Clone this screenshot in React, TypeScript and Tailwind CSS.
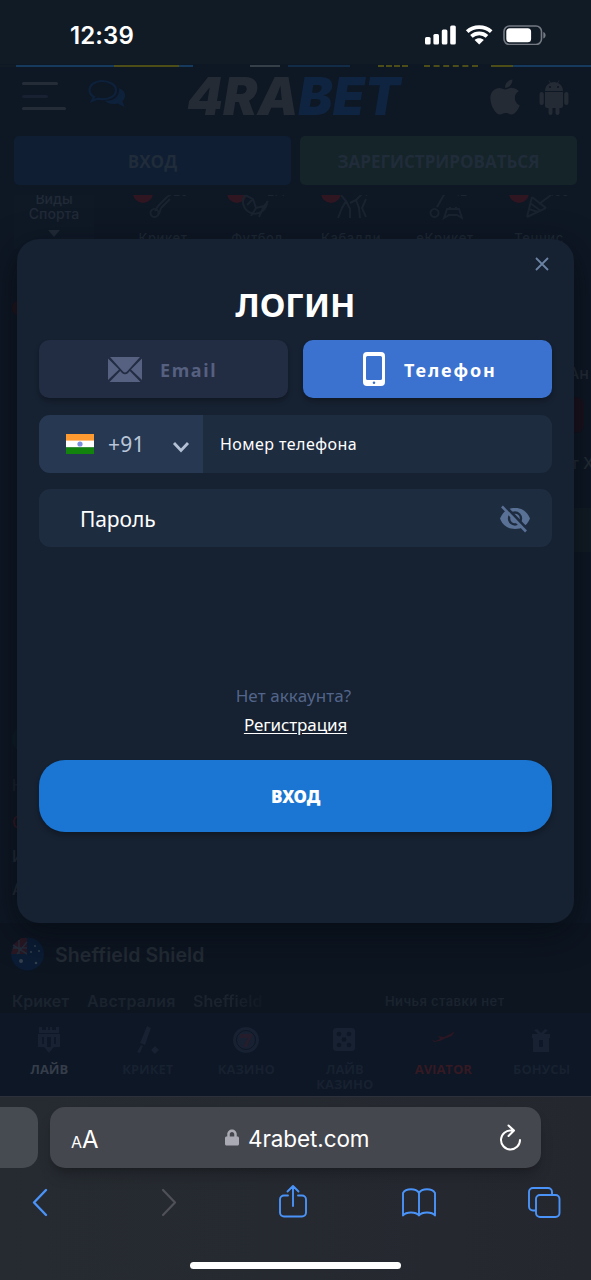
import { useState } from 'react';
import type { ReactNode } from 'react';
import { FaApple, FaLock } from 'react-icons/fa';

interface Sport {
  name: string;
  count: string;
  live: boolean;
  icon: ReactNode;
}

const SPORTS: Sport[] = [
  {
    name: 'Крикет',
    count: '20',
    live: true,
    icon: <path d="M22 6l6-4M22 6l-9 9M25 8l-9 9M6 20a4 4 0 107 4 4 4 0 00-7-4zM13 15l-3 5M16 17l-2 6" />,
  },
  {
    name: 'Футбол',
    count: '277',
    live: true,
    icon: <path d="M6 4a12 12 0 1022 6M6 4l8 4 3 9-5 8M17 17l8-2 4-5M8 14l6-6M20 26l5-11" />,
  },
  {
    name: 'Кабадди',
    count: '4',
    live: true,
    icon: <path d="M8 4l5 6-4 7-4 10M13 10l4 8v9M29 3l-6 6 3 8 1 10M23 9l-6 3M33 8l-4 9 4 9" />,
  },
  {
    name: 'еКрикет',
    count: '12',
    live: false,
    icon: <path d="M18 2l-8 14M4 20a4 4 0 107 4 4 4 0 00-7-4zM20 18h12l3 9-5-3h-8l-5 3zM23 16v3M29 16v3" />,
  },
  {
    name: 'Теннис',
    count: '106',
    live: true,
    icon: <path d="M6 26L11 6M6 26l19-9M11 6l14 11M30 4l-12 9M8 18l9 3M9 12l11 8" />,
  },
];

interface NavItem {
  label: string;
  color: string;
  icon: ReactNode;
}

const NAV: NavItem[] = [
  {
    label: 'ЛАЙВ',
    color: 'text-[#353d4a]',
    icon: (
      <g className="fill-[#172131]">
        <path d="M3 1h3v3h4V1h2v3h2V1h2v3h4V1h3v6H3z" />
        <path d="M2 8h22v13h-6l-5 6-5-6H2zM6 11v7h2v-7zm5 0v10h4V11zm7 0v7h2v-7z" />
      </g>
    ),
  },
  {
    label: 'КРИКЕТ',
    color: 'text-[#172130]',
    icon: (
      <g className="fill-[#172131]">
        <path d="M13 0l4 2-6 17-5-2zM7 19l2 1-3 7-3-1z" />
        <path d="M21 20l4 4-4 4-4-4z" />
      </g>
    ),
  },
  {
    label: 'КАЗИНО',
    color: 'text-[#172130]',
    icon: (
      <g>
        <circle cx="13" cy="14" r="13" className="fill-[#172131]" />
        <circle cx="13" cy="14" r="9.500" className="fill-none stroke-[#0e1725] stroke-1" />
        <path d="M7 8h13l-6 13h-4l5-9H7z" className="fill-[#251d2b]" />
      </g>
    ),
  },
  {
    label: 'ЛАЙВ КАЗИНО',
    color: 'text-[#172130]',
    icon: (
      <g>
        <rect x="2" y="2" width="22" height="23" rx="3" className="fill-[#172131]" />
        <g className="fill-[#0e1725]">
          <circle cx="8" cy="8" r="2.3" />
          <circle cx="18" cy="8" r="2.3" />
          <circle cx="13" cy="13.5" r="2.3" />
          <circle cx="8" cy="19" r="2.3" />
          <circle cx="18" cy="19" r="2.3" />
        </g>
      </g>
    ),
  },
  {
    label: 'AVIATOR',
    color: 'text-[#351923]',
    icon: <path d="M1 13l3 3 6-1 4-2 8-3 3-5-5 3-6 3-6-1 2 3-5 2z" className="fill-[#2a1723]" />,
  },
  {
    label: 'БОНУСЫ',
    color: 'text-[#172130]',
    icon: (
      <path
        d="M4 8h6L6 4l3-1 4 4 4-4 3 1-4 4h6v4h-1v14H5V12H4zM11 14v7h4v-7z"
        className="fill-[#172131]"
      />
    ),
  },
];

function StatusBar() {
  return (
    <div className="flex h-16 shrink-0 items-center bg-[#111b26] pt-1.5 pl-[70px] pr-[45px]">
      <span className="pt-0.5 font-['Inter'] text-[24px] font-semibold tracking-[0.1px] text-white">12:39</span>
      <svg width="121" height="20" viewBox="0 0 121 20" className="ml-auto">
        <g className="fill-white">
          <rect x="0" y="12" width="5.6" height="7.5" rx="1.5" />
          <rect x="8.4" y="9" width="5.6" height="10.5" rx="1.5" />
          <rect x="16.8" y="4.5" width="5.6" height="15" rx="1.5" />
          <rect x="25.2" y="0.5" width="5.6" height="19" rx="1.5" />
          <path d="M54.2 19.6l-4.600-4.600c2.300-2.200 6.900-2.200 9.200 0z" />
        </g>
        <path d="M42.200 6.600c6.700-6 17.300-6 24 0M46.400 11.400c4.500-4 11.100-4 15.600 0" className="fill-none stroke-white stroke-[3.8]" />
        <rect x="79" y="1" width="37.5" height="18.5" rx="5.5" className="fill-none stroke-[#747982] stroke-[1.6]" />
        <rect x="81.3" y="3.3" width="24.8" height="14" rx="3.5" className="fill-white" />
        <path d="M118.3 7c3 .9 3 5.600 0 6.500z" className="fill-[#747982]" />
      </svg>
    </div>
  );
}

function SiteHeader() {
  return (
    <header className="flex h-[69px] shrink-0 items-start pt-1.5 pl-[22px] pr-[22px]">
      <div className="flex w-11 flex-col gap-[9.5px] pt-[9px]">
        <span className="h-[3px] w-9 rounded bg-[#242c38]" />
        <span className="h-[3px] w-[26px] rounded bg-[#172131]" />
        <span className="h-[3px] w-11 rounded bg-[#242c38]" />
      </div>
      <svg width="38" height="30" viewBox="0 0 38 30" className="ml-[22px] mt-1.5">
        <path
          d="M14 2C7 2 1.500 5.800 1.500 11c0 3 1.800 5.500 4.500 7l-2 4 6-2.400c10 2 18-2 18-8.600C28 5.800 21 2 14 2z"
          className="fill-none stroke-[#0e213b] stroke-[2.2]"
        />
        <path d="M31 9c7 3 8 9 3.500 13l2 6-7-3.500c-6 1.500-11-.5-13-3 9 1 15.500-4 14.500-12.500z" className="fill-[#0e213b]" />
      </svg>
      <svg width="220" height="62" viewBox="0 0 220 62" className="ml-[61px] -mt-1.5 overflow-visible">
        <text
          x="0"
          y="48"
          textLength="213"
          lengthAdjust="spacingAndGlyphs"
          className="font-['Inter'] text-[52px] leading-none font-black italic"
        >
          <tspan className="fill-[#242b35]">4RA</tspan>
          <tspan className="fill-[#0f2440]">BET</tspan>
        </text>
      </svg>
      <div className="ml-auto flex items-center gap-[17px] pt-1">
        <FaApple className="h-[40px] w-[34px] text-[#242b35]" />
        <svg width="30" height="35" viewBox="0 0 30 35" className="fill-[#242b35]">
          <path d="M6 11c0-4 2-6.500 5-8L9.500.600l.6-.4L11.800 2.700c2-.8 4.400-.8 6.400 0L19.900.200l.6.4L19 3c3 1.500 5 4 5 8zM11 6a1 1 0 100 2 1 1 0 000-2zM19 6a1 1 0 100 2 1 1 0 000-2z" />
          <path d="M6 12h18v14a2 2 0 01-2 2h-1.500v5a2 2 0 01-4 0v-5h-3v5a2 2 0 01-4 0v-5H8a2 2 0 01-2-2z" />
          <rect x="0.500" y="12" width="4.300" height="13" rx="2.100" />
          <rect x="25.200" y="12" width="4.300" height="13" rx="2.100" />
        </svg>
      </div>
    </header>
  );
}

function SportsRow() {
  return (
    <div className="flex h-[54px] shrink-0 overflow-hidden">
      <div className="ml-[14px] flex w-[80px] flex-col items-center bg-[#0f1926] font-['Inter'] text-[14px] leading-[16px] font-medium text-[#212a37]">
        <span className="-mt-1">Виды</span>
        <span className="-mt-px">Спорта</span>
        <span className="mt-2 border-x-[6px] border-t-[7px] border-x-transparent border-t-[#212a37]" />
      </div>
      <div className="ml-[22px] flex gap-0">
        {SPORTS.map((sport) => (
          <div key={sport.name} className="flex w-[94px] flex-col items-center">
            <div className="flex h-9 w-[60px] items-start">
              <span
                className={
                  sport.live
                    ? '-mt-3 -mr-3 h-5 w-5 shrink-0 rounded-full bg-[#2f1620]'
                    : '-mr-3 h-5 w-5 shrink-0'
                }
              />
              <svg width="36" height="32" viewBox="0 0 36 32" className="ml-1 -mt-1 shrink-0 fill-none stroke-[#192330] stroke-2">
                {sport.icon}
              </svg>
              <span className="-ml-2 -mt-2.5 font-['Inter'] text-[12px] leading-[14px] text-[#1c2632]">{sport.count}</span>
            </div>
            <span className="font-['Inter'] text-[13px] leading-[14px] font-medium tracking-[0.6px] text-[#1f2936]">
              {sport.name}
            </span>
          </div>
        ))}
      </div>
    </div>
  );
}

// Match feed: only its edges stick out from under the dialog
function Feed() {
  return (
    <div className="flex h-[684px] shrink-0 justify-between overflow-hidden font-['Inter'] text-[16px] leading-6 font-medium text-[#252d37]">
      <div className="flex w-6 flex-col pl-3">
        <span className="mt-[61px] h-4 w-5 rounded-full bg-[#22141d]" />
        <span className="mt-[409px] h-7 w-7 rounded-full bg-[#0e1d29]" />
        <span className="mt-[20px] text-[#1b232e]">Н</span>
        <span className="mt-[13px] text-[#3a1820]">0</span>
        <span className="mt-2.5">И</span>
        <span className="mt-[9px]">А</span>
      </div>
      <div className="flex w-[23px] flex-col">
        <span className="mt-[122px]">Ан</span>
        <span className="mt-3 h-9 w-4 rounded-full bg-[#1b111c]" />
        <span className="mt-[18px] ml-[3px] whitespace-nowrap">т Х</span>
        <span className="mt-[33px] h-11 w-[23px] bg-[#121c24]" />
      </div>
    </div>
  );
}

function LeagueRow() {
  return (
    <div className="flex h-[90px] shrink-0 flex-col bg-[#0d1521]">
      <div className="flex items-center gap-[11px] pt-[14px] pl-[11px]">
        <svg width="33" height="34" viewBox="0 0 33 34">
          <circle cx="16.500" cy="17" r="16.500" className="fill-[#0b1c34]" />
          <path d="M3 7l7-6h6v16H0z" className="fill-[#2a1723]" />
          <path d="M2 8l14 9M16 5L6 17M8 3v14M2 11h14" className="stroke-[#232c3a] stroke-[1.500]" />
          <g className="fill-[#34404d]">
            <circle cx="10" cy="24" r="2" />
            <circle cx="24" cy="9" r="1" />
            <circle cx="20" cy="15" r="1" />
            <circle cx="28" cy="14" r="1" />
            <circle cx="25" cy="26" r="1.300" />
          </g>
        </svg>
        <span className="pt-0.5 font-['Inter'] text-[19.5px] leading-[30px] font-semibold tracking-[0.1px] text-[#232b34]">
          Sheffield Shield
        </span>
      </div>
      <div className="mt-[20px] flex items-center pl-3 font-['Inter'] font-semibold text-[#1a232e]">
        <span className="w-[75px] text-[16px] leading-5">Крикет</span>
        <span className="w-[106px] text-[16px] leading-5 tracking-[0.3px]">Австралия</span>
        <span className="w-[192px] bg-gradient-to-r from-[#1a232e] from-[20%] to-[#0d1521] to-[42%] bg-clip-text text-[16px] leading-5 text-transparent">
          Sheffield
        </span>
        <span className="text-[13px] leading-5 tracking-[0.4px]">Ничья ставки нет</span>
      </div>
    </div>
  );
}

function BottomNav() {
  return (
    <nav className="grid h-[83px] shrink-0 grid-cols-6 bg-[#0d1725]">
      {NAV.map((item) => (
        <div key={item.label} className="flex flex-col items-center pt-[13px]">
          <svg width="27" height="28" viewBox="0 0 27 28">
            {item.icon}
          </svg>
          <span
            className={`mt-2 w-16 text-center font-['Open_Sans'] text-[13px] leading-[15px] font-bold ${item.color}`}
          >
            {item.label}
          </span>
        </div>
      ))}
    </nav>
  );
}

function BrowserBar() {
  return (
    <div className="flex h-[184px] shrink-0 flex-col border-t border-[#2b303b] bg-gradient-to-r from-[#262b31] to-[#25272f]">
      <div className="mt-2.5 flex h-[61px] gap-3">
        <div className="w-[38px] rounded-r-[15px] bg-[#464b51]" />
        <div className="flex w-[491px] items-center rounded-[15px] bg-[#45474e] pl-[21px] pr-[19px] font-['Inter'] text-white shadow-lg shadow-black/20">
          <span className="flex w-[154px] items-baseline pt-1">
            <span className="text-[16px]">A</span>
            <span className="text-[24px]">A</span>
          </span>
          <FaLock className="h-[19px] w-[14px] text-[#a9aab3]" />
          <span className="ml-[9px] pt-0.5 text-[22.500px] tracking-[-0.1px]">4rabet.com</span>
          <svg width="23" height="28" viewBox="0 0 23 28" className="ml-auto fill-none stroke-white stroke-2">
            <path d="M12.500 6.500A9.500 9.500 0 1021 16M9.500 1.500l5.500 5-5.500 5.500" strokeLinecap="round" strokeLinejoin="round" />
          </svg>
        </div>
      </div>
      <div className="mt-[15px] flex h-[38px] items-center pl-[31px] text-[#4a93f8]">
        <svg width="18" height="38" viewBox="0 0 18 38" className="fill-none stroke-current stroke-[2.4]">
          <path d="M15 7L3 19.500 15 32" strokeLinecap="round" strokeLinejoin="round" />
        </svg>
        <svg width="18" height="38" viewBox="0 0 18 38" className="ml-[111px] fill-none stroke-[#505158] stroke-[2.200]">
          <path d="M3 7l12 12.500L3 32" strokeLinecap="round" strokeLinejoin="round" />
        </svg>
        <svg width="28" height="38" viewBox="0 0 28 38" className="ml-[101px] fill-none stroke-current stroke-[1.900]">
          <path
            d="M9 12.500H5a4 4 0 00-4 4v13a4 4 0 004 4h18a4 4 0 004-4v-13a4 4 0 00-4-4h-4M14 23V3M8.500 8.500L14 3l5.500 5.500"
            strokeLinecap="round"
            strokeLinejoin="round"
          />
        </svg>
        <svg width="34" height="38" viewBox="0 0 34 38" className="ml-[95px] fill-none stroke-current stroke-[1.900]">
          <path
            d="M17 32.500c-3-4-13-4-16 0V10c3-5 13-5 16 0 3-5 13-5 16 0v22.500c-3-4-13-4-16 0zM17 10v22"
            strokeLinejoin="round"
          />
        </svg>
        <svg width="34" height="38" viewBox="0 0 34 38" className="ml-[91px] fill-none stroke-current stroke-[1.900]">
          <path d="M9 27.500H6a4 4 0 01-4-4V9a4 4 0 014-4h15a4 4 0 014 4v3" />
          <rect x="9" y="12" width="23.500" height="22" rx="4" />
        </svg>
      </div>
      <div className="mx-auto mt-auto mb-[11px] h-[7px] w-[211px] rounded-full bg-white" />
    </div>
  );
}

function LoginModal() {
  const [method, setMethod] = useState<'email' | 'phone'>('phone');

  const tabClass = (active: boolean) =>
    `flex h-[58px] w-[249px] items-center rounded-[10px] font-['Noto_Sans'] text-[18px] font-bold shadow-md shadow-black/20 ${
      active ? 'bg-[#3b72cf] text-white' : 'bg-[#222c42] text-[#566080]'
    }`;

  return (
    <div className="absolute top-[239px] left-[17px] flex h-[684px] w-[557px] flex-col rounded-[22px] bg-[#162131] px-[22px] font-['Noto_Sans',sans-serif] shadow-[0_10px_34px_rgba(6,11,17,0.75)]">
      <button className="mt-[17px] mr-0.5 ml-auto h-4 w-4">
        <svg width="16" height="16" viewBox="0 0 16 16" className="fill-none stroke-[#6b83a3] stroke-[1.800]">
          <path d="M2 2l12 12M14 2L2 14" />
        </svg>
      </button>
      <h1 className="mt-2.5 h-[58px] text-center text-[33px] leading-[46px] font-bold text-white">ЛОГИН</h1>

      <div className="flex justify-between">
        <button className={tabClass(method === 'email')} onClick={() => setMethod('email')}>
          <svg width="34" height="25" viewBox="0 0 34 25" className="ml-[69px]">
            <path
              d="M2 0h30L19 14.500c-1.200 1.300-2.800 1.300-4 0zM0 1.500L11 12.500 0 23zM34 1.500v21.500L23 12.500zM12.200 14l2 2.200c1.600 1.500 4 1.500 5.600 0l2-2.200L32.500 25h-31z"
              className="fill-[#566080]"
            />
          </svg>
          <span className="ml-[18px] pt-0.5 tracking-[1.6px]">Email</span>
        </button>
        <button className={tabClass(method === 'phone')} onClick={() => setMethod('phone')}>
          <svg width="22" height="34" viewBox="0 0 22 34" className="ml-[60px]">
            <path
              fillRule="evenodd"
              d="M4 0h14a4 4 0 014 4v26a4 4 0 01-4 4H4a4 4 0 01-4-4V4a4 4 0 014-4zM4.500 4A1.500 1.500 0 003 5.500v21A1.500 1.500 0 004.500 28h13a1.500 1.500 0 001.500-1.500v-21A1.500 1.500 0 0017.500 4zM11 29.500a1.300 1.300 0 100 2.600 1.300 1.300 0 000-2.600z"
              className="fill-white"
            />
          </svg>
          <span className="ml-[19px] pt-0.5 tracking-[1.9px]">Телефон</span>
        </button>
      </div>

      <div className="mt-[17px] flex h-[58px] shrink-0 overflow-hidden rounded-[11px] bg-[#1e2c40]">
        <div className="flex w-[164px] items-center bg-[#273852] pl-[27px]">
          <svg width="28" height="20" viewBox="0 0 28 20">
            <rect width="28" height="7" className="fill-[#ff9a30]" />
            <rect y="6.600" width="28" height="7" className="fill-white" />
            <rect y="13.300" width="28" height="6.700" className="fill-[#12830d]" />
            <circle cx="14" cy="10" r="2.600" className="fill-[#7f8fe0]" />
          </svg>
          <span className="ml-3.5 pt-0.5 text-[21px] tracking-[0.2px] text-[#b9c5d8]">+91</span>
          <svg width="18" height="12" viewBox="0 0 18 12" className="mt-1.5 ml-[27px] fill-none stroke-[#b4c0d3] stroke-[2.800]">
            <path d="M2 2l7 7.500L16 2" />
          </svg>
        </div>
        <span className="self-center pl-[17px] text-[16px] tracking-[0.45px] text-white">Номер телефона</span>
      </div>

      <div className="mt-4 flex h-[58px] shrink-0 items-center rounded-[11px] bg-[#1e2c40] pt-0.5 pr-[21px] pl-[41px]">
        <span className="pt-0.5 text-[21px] tracking-[-0.1px] text-white">Пароль</span>
        <svg width="32" height="28" viewBox="0 0 32 28" className="ml-auto">
          <path d="M1 13.500C4 6 9.500 3 16 3s12 3 15 10.500C28 21 22.500 24 16 24S4 21 1 13.500z" className="fill-[#5a7196]" />
          <circle cx="16" cy="13.500" r="6" className="fill-none stroke-[#1e2c40] stroke-[2.400]" />
          <path d="M5 0l24 25" className="stroke-[#1e2c40] stroke-[3]" />
          <path d="M3 1.500l24 25" className="stroke-[#5a7196] stroke-[2.600]" />
        </svg>
      </div>

      <div className="mt-[136px] flex flex-col items-center">
        <span className="-ml-1 text-[17px] leading-[26px] tracking-[0.1px] text-[#53658a]">Нет аккаунта?</span>
        <a className="mt-[3px] text-[17px] leading-[26px] tracking-[-0.1px] text-white underline underline-offset-2">
          Регистрация
        </a>
      </div>
      <button className="mt-[22px] h-[72px] shrink-0 rounded-[26px] bg-[#1a76d2] pt-px text-[17px] font-black tracking-[-0.2px] text-white shadow-md shadow-black/20">
        ВХОД
      </button>
    </div>
  );
}

export default function App() {
  return (
    <div className="relative flex h-[1280px] w-[591px] flex-col overflow-hidden bg-[#0e1724]">
      <StatusBar />
      <div className="mt-px flex h-0.5 shrink-0">
        <span className="w-4 bg-[#111b26]" />
        <span className="w-[98px] bg-[#163a5e]" />
        <span className="w-[65px] bg-[#4c4d17]" />
        <span className="w-[14px] bg-[#163a5e]" />
        <span className="w-[57px]" />
        <span className="w-[30px] bg-[#343f48]" />
        <span className="w-2" />
        <span className="w-[62px] bg-[#122b47]" />
        <span className="w-[28px]" />
        <span className="w-[30px] border-t-2 border-dashed border-[#4c4d17]" />
        <span className="w-[16px]" />
        <span className="w-[54px] border-t-2 border-dashed border-[#4c4d17]" />
        <span className="w-[13px]" />
        <span className="w-[22px] bg-[#4c4d17]" />
        <span className="flex-1 bg-[#163a5e]" />
      </div>
      <SiteHeader />
      <div className="flex h-[49px] shrink-0 gap-[9px] px-[14px] font-['Open_Sans'] text-[17px] font-bold text-[#202c3a]">
        <button className="flex-1 rounded-[5px] bg-[#0f1e33] pt-0.5">ВХОД</button>
        <button className="flex-1 rounded-[5px] bg-[#152428] pt-0.5">ЗАРЕГИСТРИРОВАТЬСЯ</button>
      </div>
      <div className="h-[10px] shrink-0" />
      <SportsRow />
      <div className="-mt-[10px] shrink-0">
        <Feed />
      </div>
      <LeagueRow />
      <BottomNav />
      <BrowserBar />
      <LoginModal />
    </div>
  );
}
